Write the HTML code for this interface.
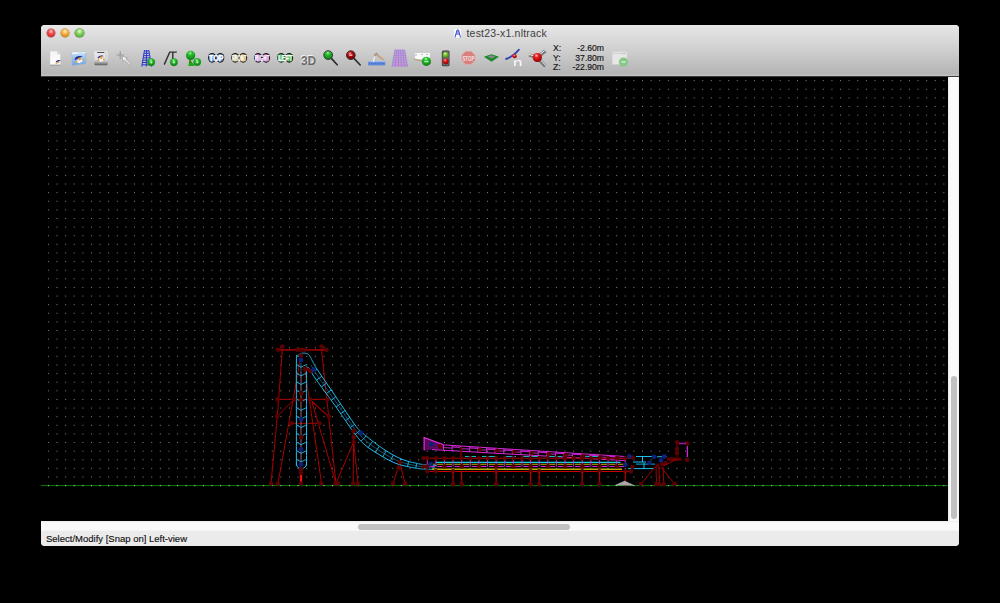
<!DOCTYPE html>
<html><head><meta charset="utf-8">
<style>
html,body{margin:0;padding:0;background:#000;width:1000px;height:603px;overflow:hidden;position:relative;font-family:"Liberation Sans",sans-serif;}
#win{position:absolute;left:41px;top:25px;width:918px;height:521px;border-radius:4px 4px 4px 4px;overflow:hidden;background:#ececec;}
#tb{position:absolute;left:0;top:0;width:918px;height:52px;background:linear-gradient(#e9e9e9 0px,#e3e3e3 4px,#cecece 26px,#b4b4b4 49px,#c0c0c0 50px,#c0c0c0 51px);}
#tbline{position:absolute;left:0;top:51px;width:918px;height:1px;background:#3c3c3c;}
.btn{position:absolute;top:3.8px;width:8.4px;height:8.4px;border-radius:50%;box-sizing:border-box;}
#title{position:absolute;left:425.5px;top:2px;font-size:10.5px;letter-spacing:0.2px;color:#404040;white-space:nowrap;}
#canvas{position:absolute;left:0;top:52px;width:907px;height:444px;background:#000;overflow:hidden;}
#vs{position:absolute;left:907px;top:52px;width:11px;height:444px;background:linear-gradient(90deg,#e8e8e8,#fafafa 2px,#fafafa 9px,#f0f0f0);}
#vthumb{position:absolute;left:3px;top:299px;width:6px;height:143px;border-radius:3px;background:#c1c1c1;}
#hs{position:absolute;left:0;top:496px;width:918px;height:10px;background:linear-gradient(#ececec,#fafafa 2px,#fafafa 8px,#f4f4f4);}
#hthumb{position:absolute;left:317px;top:3px;width:212px;height:6px;border-radius:3px;background:#c1c1c1;}
#status{position:absolute;left:0;top:506px;width:918px;height:15px;background:#ebebeb;}
#stext{position:absolute;left:5px;top:1.5px;font-size:9.5px;color:#111;-webkit-text-stroke:0.15px #111;white-space:nowrap;}
.coord{position:absolute;font-size:8.5px;color:#2a2a2a;white-space:nowrap;}
</style></head><body>
<div id="win">
  <div id="tb">
    <div class="btn" style="left:5.8px;background:radial-gradient(circle at 50% 30%,#ffd0d0 0,#f05050 35%,#d83030 70%,#a02020 100%);box-shadow:0 0 0 0.5px #a04040;"></div>
    <div class="btn" style="left:20.1px;background:radial-gradient(circle at 50% 30%,#fff0c0 0,#f8b040 40%,#e09020 70%,#a8701c 100%);box-shadow:0 0 0 0.5px #a07020;"></div>
    <div class="btn" style="left:34.4px;background:radial-gradient(circle at 50% 30%,#e0ffd0 0,#88d060 40%,#60b040 70%,#3a8028 100%);box-shadow:0 0 0 0.5px #408030;"></div>
    <div id="title">test23-x1.nltrack</div>
    <div id="tbline"></div>
  </div>
  <div id="canvas"></div>
  <div id="vs"><div id="vthumb"></div></div>
  <div id="hs"><div id="hthumb"></div></div>
  <div id="status"><div id="stext">Select/Modify [Snap on] Left-view</div></div>
</div>
<svg id="draw" width="1000" height="603" viewBox="0 0 1000 603" style="position:absolute;left:0;top:0">
<g id="grid"><path d="M47.91 80.62 H948" stroke="#868686" stroke-width="1" stroke-dasharray="1 7.61"/>
<path d="M47.91 89.24 H948" stroke="#868686" stroke-width="1" stroke-dasharray="1 7.61"/>
<path d="M47.91 97.85 H948" stroke="#868686" stroke-width="1" stroke-dasharray="1 7.61"/>
<path d="M47.91 106.47 H948" stroke="#868686" stroke-width="1" stroke-dasharray="1 7.61"/>
<path d="M47.91 115.09 H948" stroke="#868686" stroke-width="1" stroke-dasharray="1 7.61"/>
<path d="M47.91 123.71 H948" stroke="#868686" stroke-width="1" stroke-dasharray="1 7.61"/>
<path d="M47.91 132.32 H948" stroke="#868686" stroke-width="1" stroke-dasharray="1 7.61"/>
<path d="M47.91 140.94 H948" stroke="#868686" stroke-width="1" stroke-dasharray="1 7.61"/>
<path d="M47.91 149.56 H948" stroke="#868686" stroke-width="1" stroke-dasharray="1 7.61"/>
<path d="M47.91 158.17 H948" stroke="#868686" stroke-width="1" stroke-dasharray="1 7.61"/>
<path d="M47.91 166.79 H948" stroke="#868686" stroke-width="1" stroke-dasharray="1 7.61"/>
<path d="M47.91 175.41 H948" stroke="#868686" stroke-width="1" stroke-dasharray="1 7.61"/>
<path d="M47.91 184.02 H948" stroke="#868686" stroke-width="1" stroke-dasharray="1 7.61"/>
<path d="M47.91 192.64 H948" stroke="#868686" stroke-width="1" stroke-dasharray="1 7.61"/>
<path d="M47.91 201.26 H948" stroke="#868686" stroke-width="1" stroke-dasharray="1 7.61"/>
<path d="M47.91 209.88 H948" stroke="#868686" stroke-width="1" stroke-dasharray="1 7.61"/>
<path d="M47.91 218.49 H948" stroke="#868686" stroke-width="1" stroke-dasharray="1 7.61"/>
<path d="M47.91 227.11 H948" stroke="#868686" stroke-width="1" stroke-dasharray="1 7.61"/>
<path d="M47.91 235.73 H948" stroke="#868686" stroke-width="1" stroke-dasharray="1 7.61"/>
<path d="M47.91 244.34 H948" stroke="#868686" stroke-width="1" stroke-dasharray="1 7.61"/>
<path d="M47.91 252.96 H948" stroke="#868686" stroke-width="1" stroke-dasharray="1 7.61"/>
<path d="M47.91 261.58 H948" stroke="#868686" stroke-width="1" stroke-dasharray="1 7.61"/>
<path d="M47.91 270.19 H948" stroke="#868686" stroke-width="1" stroke-dasharray="1 7.61"/>
<path d="M47.91 278.81 H948" stroke="#868686" stroke-width="1" stroke-dasharray="1 7.61"/>
<path d="M47.91 287.43 H948" stroke="#868686" stroke-width="1" stroke-dasharray="1 7.61"/>
<path d="M47.91 296.05 H948" stroke="#868686" stroke-width="1" stroke-dasharray="1 7.61"/>
<path d="M47.91 304.66 H948" stroke="#868686" stroke-width="1" stroke-dasharray="1 7.61"/>
<path d="M47.91 313.28 H948" stroke="#868686" stroke-width="1" stroke-dasharray="1 7.61"/>
<path d="M47.91 321.90 H948" stroke="#868686" stroke-width="1" stroke-dasharray="1 7.61"/>
<path d="M47.91 330.51 H948" stroke="#868686" stroke-width="1" stroke-dasharray="1 7.61"/>
<path d="M47.91 339.13 H948" stroke="#868686" stroke-width="1" stroke-dasharray="1 7.61"/>
<path d="M47.91 347.75 H948" stroke="#868686" stroke-width="1" stroke-dasharray="1 7.61"/>
<path d="M47.91 356.36 H948" stroke="#868686" stroke-width="1" stroke-dasharray="1 7.61"/>
<path d="M47.91 364.98 H948" stroke="#868686" stroke-width="1" stroke-dasharray="1 7.61"/>
<path d="M47.91 373.60 H948" stroke="#868686" stroke-width="1" stroke-dasharray="1 7.61"/>
<path d="M47.91 382.22 H948" stroke="#868686" stroke-width="1" stroke-dasharray="1 7.61"/>
<path d="M47.91 390.83 H948" stroke="#868686" stroke-width="1" stroke-dasharray="1 7.61"/>
<path d="M47.91 399.45 H948" stroke="#868686" stroke-width="1" stroke-dasharray="1 7.61"/>
<path d="M47.91 408.07 H948" stroke="#868686" stroke-width="1" stroke-dasharray="1 7.61"/>
<path d="M47.91 416.68 H948" stroke="#868686" stroke-width="1" stroke-dasharray="1 7.61"/>
<path d="M47.91 425.30 H948" stroke="#868686" stroke-width="1" stroke-dasharray="1 7.61"/>
<path d="M47.91 433.92 H948" stroke="#868686" stroke-width="1" stroke-dasharray="1 7.61"/>
<path d="M47.91 442.53 H948" stroke="#868686" stroke-width="1" stroke-dasharray="1 7.61"/>
<path d="M47.91 451.15 H948" stroke="#868686" stroke-width="1" stroke-dasharray="1 7.61"/>
<path d="M47.91 459.77 H948" stroke="#868686" stroke-width="1" stroke-dasharray="1 7.61"/>
<path d="M47.91 468.39 H948" stroke="#868686" stroke-width="1" stroke-dasharray="1 7.61"/>
<path d="M47.91 477.00 H948" stroke="#868686" stroke-width="1" stroke-dasharray="1 7.61"/>
<path d="M47.91 485.62 H948" stroke="#868686" stroke-width="1" stroke-dasharray="1 7.61"/></g>
<path d="M41 485.6 H948" stroke="#067a06" stroke-width="1"/>
<path d="M47.91 485.6 H948" stroke="#c8c8c8" stroke-width="1" stroke-dasharray="1 7.61"/>
<path d="M277.50 349.80 L327.30 349.80" stroke="#900000" stroke-width="1.80" fill="none"/>
<path d="M282.30 350.00 L277.30 416.50 L271.00 483.50" stroke="#aa0000" stroke-width="1.00" fill="none"/>
<path d="M321.50 350.00 L328.70 416.50 L336.00 483.50" stroke="#aa0000" stroke-width="1.00" fill="none"/>
<path d="M277.50 399.40 L327.30 399.40" stroke="#aa0000" stroke-width="1.00" fill="none"/>
<path d="M294.20 399.40 L277.20 416.40" stroke="#aa0000" stroke-width="1.00" fill="none"/>
<path d="M310.00 399.40 L328.70 416.40" stroke="#aa0000" stroke-width="1.00" fill="none"/>
<path d="M291.50 423.30 L319.50 423.30" stroke="#aa0000" stroke-width="1.00" fill="none"/>
<path d="M300.50 358.00 L278.00 483.50" stroke="#aa0000" stroke-width="1.00" fill="none"/>
<path d="M305.00 370.00 L321.60 483.60" stroke="#aa0000" stroke-width="1.00" fill="none"/>
<path d="M312.00 402.00 L336.00 483.50" stroke="#aa0000" stroke-width="1.00" fill="none"/>
<path d="M312.00 402.00 L328.40 416.40" stroke="#aa0000" stroke-width="1.00" fill="none"/>
<path d="M301.00 466.00 L301.00 483.50" stroke="#aa0000" stroke-width="0.80" fill="none"/>
<path d="M301.00 474.00 L301.00 483.00" stroke="#ff1010" stroke-width="2.20" fill="none"/>
<path d="M336.00 483.50 L353.70 441.80" stroke="#aa0000" stroke-width="1.00" fill="none"/>
<path d="M353.70 431.00 L353.20 483.50" stroke="#aa0000" stroke-width="1.00" fill="none"/>
<path d="M353.70 442.00 L358.00 483.50" stroke="#aa0000" stroke-width="1.00" fill="none"/>
<path d="M399.80 462.30 L393.00 483.50" stroke="#aa0000" stroke-width="1.00" fill="none"/>
<path d="M399.80 462.30 L405.00 483.50" stroke="#aa0000" stroke-width="1.00" fill="none"/>
<path d="M296.40 466.00 L296.40 463.32 L296.40 459.95 L296.40 455.99 L296.40 451.54 L296.40 446.69 L296.40 441.54 L296.40 436.20 L296.40 430.77 L296.40 425.33 L296.40 420.00 L296.40 414.38 L296.39 408.16 L296.37 401.55 L296.36 394.73 L296.34 387.92 L296.34 381.31 L296.33 375.12 L296.34 369.53 L296.36 364.76 L296.40 361.00 L296.44 358.32 L296.49 356.55 L296.54 355.53 L296.59 355.11 L296.66 355.12 L296.75 355.42 L296.85 355.85 L296.97 356.24 L297.12 356.44 L297.30 356.30 L297.51 355.95 L297.74 355.61 L297.99 355.30 L298.27 355.01 L298.56 354.74 L298.88 354.49 L299.21 354.26 L299.56 354.05 L299.92 353.87 L300.30 353.70 L300.71 353.56 L301.15 353.44 L301.62 353.34 L302.11 353.26 L302.61 353.20 L303.12 353.16 L303.62 353.14 L304.10 353.14 L304.57 353.16 L305.00 353.20 L305.41 353.25 L305.81 353.32 L306.20 353.41 L306.58 353.51 L306.94 353.64 L307.30 353.78 L307.64 353.95 L307.97 354.14 L308.29 354.36 L308.60 354.60 L308.89 354.87 L309.15 355.16 L309.39 355.48 L309.62 355.82 L309.84 356.18 L310.05 356.57 L310.27 356.97 L310.50 357.40 L310.74 357.84 L311.00 358.30 L311.27 358.79 L311.56 359.31 L311.85 359.87 L312.14 360.44 L312.44 361.03 L312.75 361.63 L313.06 362.23 L313.37 362.83 L313.69 363.43 L314.00 364.00 L314.25 364.47 L314.39 364.78 L314.48 365.00 L314.56 365.20 L314.67 365.44 L314.86 365.80 L315.17 366.32 L315.65 367.09 L316.34 368.16 L317.30 369.60 L318.54 371.45 L320.05 373.68 L321.77 376.20 L323.66 378.96 L325.67 381.90 L327.76 384.95 L329.88 388.05 L331.99 391.13 L334.05 394.14 L336.00 397.00 L337.94 399.87 L339.97 402.89 L342.06 406.00 L344.15 409.14 L346.23 412.24 L348.25 415.25 L350.17 418.09 L351.96 420.70 L353.58 423.03 L355.00 425.00 L356.16 426.57 L357.07 427.76 L357.79 428.66 L358.38 429.33 L358.88 429.84 L359.34 430.27 L359.84 430.68 L360.41 431.14 L361.11 431.72 L362.00 432.50 L363.07 433.44 L364.26 434.46 L365.55 435.54 L366.91 436.65 L368.31 437.78 L369.73 438.91 L371.13 440.01 L372.50 441.08 L373.79 442.08 L375.00 443.00 L376.12 443.85 L377.19 444.64 L378.22 445.39 L379.22 446.10 L380.19 446.78 L381.14 447.44 L382.09 448.08 L383.05 448.72 L384.01 449.36 L385.00 450.00 L386.00 450.65 L387.00 451.29 L388.00 451.92 L389.00 452.55 L390.00 453.16 L391.00 453.76 L392.00 454.35 L393.00 454.92 L394.00 455.47 L395.00 456.00 L396.00 456.51 L397.00 457.01 L398.00 457.49 L399.00 457.96 L400.00 458.41 L401.00 458.85 L402.00 459.26 L403.00 459.66 L404.00 460.04 L405.00 460.40 L406.01 460.74 L407.03 461.05 L408.06 461.35 L409.10 461.62 L410.12 461.88 L411.14 462.13 L412.15 462.36 L413.13 462.58 L414.08 462.79 L415.00 463.00 L415.85 463.20 L416.63 463.37 L417.36 463.54 L418.06 463.69 L418.75 463.83 L419.46 463.97 L420.22 464.10 L421.05 464.23 L421.97 464.36 L423.00 464.50 L424.22 464.64 L425.64 464.79 L427.20 464.95 L428.84 465.10 L430.50 465.24 L432.12 465.38 L433.64 465.51 L435.00 465.63 L436.14 465.72 L437.00 465.80" stroke="#20bcee" stroke-width="1.00" fill="none"/>
<path d="M306.50 466.00 L306.50 463.27 L306.50 459.78 L306.50 455.64 L306.50 451.01 L306.50 446.00 L306.50 440.75 L306.50 435.40 L306.50 430.06 L306.50 424.89 L306.50 420.00 L306.50 415.09 L306.48 409.83 L306.47 404.38 L306.45 398.86 L306.43 393.41 L306.42 388.16 L306.42 383.27 L306.43 378.85 L306.46 375.05 L306.50 372.00 L306.56 369.76 L306.62 368.21 L306.69 367.24 L306.77 366.74 L306.87 366.61 L306.98 366.72 L307.10 366.98 L307.25 367.27 L307.41 367.48 L307.60 367.50 L307.81 367.43 L308.04 367.43 L308.29 367.50 L308.55 367.65 L308.84 367.86 L309.14 368.13 L309.46 368.46 L309.79 368.85 L310.14 369.30 L310.50 369.80 L310.82 370.29 L311.05 370.75 L311.24 371.22 L311.44 371.73 L311.68 372.33 L312.01 373.05 L312.46 373.94 L313.08 375.03 L313.92 376.37 L315.00 378.00 L316.37 379.96 L318.01 382.25 L319.86 384.80 L321.88 387.56 L324.03 390.48 L326.26 393.50 L328.51 396.57 L330.75 399.63 L332.93 402.62 L335.00 405.50 L337.05 408.39 L339.16 411.42 L341.31 414.53 L343.48 417.67 L345.62 420.78 L347.72 423.81 L349.74 426.70 L351.64 429.40 L353.41 431.85 L355.00 434.00 L356.40 435.83 L357.64 437.38 L358.74 438.71 L359.72 439.85 L360.62 440.84 L361.48 441.73 L362.31 442.55 L363.16 443.34 L364.04 444.14 L365.00 445.00 L366.00 445.87 L367.00 446.67 L368.00 447.43 L369.00 448.14 L370.00 448.81 L371.00 449.46 L372.00 450.10 L373.00 450.73 L374.00 451.36 L375.00 452.00 L376.00 452.64 L377.00 453.28 L378.00 453.90 L379.00 454.52 L380.00 455.12 L381.00 455.72 L382.00 456.31 L383.00 456.88 L384.00 457.45 L385.00 458.00 L386.00 458.55 L387.00 459.10 L388.00 459.64 L389.00 460.17 L390.00 460.69 L391.00 461.19 L392.00 461.68 L393.00 462.14 L394.00 462.59 L395.00 463.00 L396.00 463.39 L397.00 463.74 L398.00 464.08 L399.00 464.39 L400.00 464.69 L401.00 464.97 L402.00 465.24 L403.00 465.50 L404.00 465.75 L405.00 466.00 L406.01 466.25 L407.03 466.48 L408.06 466.70 L409.10 466.92 L410.12 467.12 L411.14 467.32 L412.15 467.50 L413.13 467.68 L414.08 467.85 L415.00 468.00 L415.85 468.14 L416.63 468.27 L417.36 468.39 L418.06 468.50 L418.75 468.59 L419.46 468.68 L420.22 468.77 L421.05 468.85 L421.97 468.92 L423.00 469.00 L424.22 469.07 L425.64 469.14 L427.20 469.20 L428.84 469.26 L430.50 469.31 L432.12 469.36 L433.64 469.40 L435.00 469.44 L436.14 469.47 L437.00 469.50" stroke="#20bcee" stroke-width="1.00" fill="none"/>
<path d="M296.4 463 Q296.4 468.5 301.4 468.5 Q306.5 468.5 306.5 463" stroke="#20bcee" fill="none" stroke-width="1"/>
<path d="M301.00 363.00 L301.00 466.00" stroke="#28a8dc" stroke-width="0.60" fill="none"/>
<path d="M301.00 372.00 L301.00 466.00" stroke="#c03838" stroke-width="0.70" fill="none"/>
<path d="M296.40 364.50 L301.00 367.30 L306.50 364.50" stroke="#20bcee" stroke-width="0.90" fill="none"/>
<path d="M296.40 373.11 L301.00 375.91 L306.50 373.11" stroke="#20bcee" stroke-width="0.90" fill="none"/>
<path d="M296.40 381.72 L301.00 384.52 L306.50 381.72" stroke="#20bcee" stroke-width="0.90" fill="none"/>
<path d="M296.40 390.33 L301.00 393.13 L306.50 390.33" stroke="#20bcee" stroke-width="0.90" fill="none"/>
<path d="M296.40 398.94 L301.00 401.74 L306.50 398.94" stroke="#20bcee" stroke-width="0.90" fill="none"/>
<path d="M296.40 407.55 L301.00 410.35 L306.50 407.55" stroke="#20bcee" stroke-width="0.90" fill="none"/>
<path d="M296.40 416.16 L301.00 418.96 L306.50 416.16" stroke="#20bcee" stroke-width="0.90" fill="none"/>
<path d="M296.40 424.77 L301.00 427.57 L306.50 424.77" stroke="#20bcee" stroke-width="0.90" fill="none"/>
<path d="M296.40 433.38 L301.00 436.18 L306.50 433.38" stroke="#20bcee" stroke-width="0.90" fill="none"/>
<path d="M296.40 441.99 L301.00 444.79 L306.50 441.99" stroke="#20bcee" stroke-width="0.90" fill="none"/>
<path d="M296.40 450.60 L301.00 453.40 L306.50 450.60" stroke="#20bcee" stroke-width="0.90" fill="none"/>
<path d="M296.40 459.21 L301.00 462.01 L306.50 459.21" stroke="#20bcee" stroke-width="0.90" fill="none"/>
<path d="M317.18 369.42 L311.40 371.63" stroke="#20bcee" stroke-width="0.90" fill="none"/>
<path d="M321.83 376.29 L316.47 380.10" stroke="#20bcee" stroke-width="0.90" fill="none"/>
<path d="M326.52 383.14 L321.40 386.90" stroke="#20bcee" stroke-width="0.90" fill="none"/>
<path d="M331.21 389.99 L326.38 393.67" stroke="#20bcee" stroke-width="0.90" fill="none"/>
<path d="M335.89 396.84 L331.17 400.20" stroke="#20bcee" stroke-width="0.90" fill="none"/>
<path d="M340.53 403.73 L336.07 407.02" stroke="#20bcee" stroke-width="0.90" fill="none"/>
<path d="M345.15 410.63 L340.71 413.66" stroke="#20bcee" stroke-width="0.90" fill="none"/>
<path d="M349.78 417.51 L345.48 420.57" stroke="#20bcee" stroke-width="0.90" fill="none"/>
<path d="M354.52 424.33 L350.27 427.47" stroke="#20bcee" stroke-width="0.90" fill="none"/>
<path d="M359.83 430.67 L355.21 434.27" stroke="#20bcee" stroke-width="0.90" fill="none"/>
<path d="M366.16 436.04 L360.96 441.19" stroke="#20bcee" stroke-width="0.90" fill="none"/>
<path d="M372.66 441.20 L368.15 447.53" stroke="#20bcee" stroke-width="0.90" fill="none"/>
<path d="M379.31 446.17 L375.43 452.28" stroke="#20bcee" stroke-width="0.90" fill="none"/>
<path d="M386.21 450.78 L382.86 456.80" stroke="#20bcee" stroke-width="0.90" fill="none"/>
<path d="M393.30 455.08 L390.25 460.81" stroke="#20bcee" stroke-width="0.90" fill="none"/>
<path d="M400.75 458.74 L399.12 464.43" stroke="#20bcee" stroke-width="0.90" fill="none"/>
<path d="M408.58 461.48 L407.55 466.59" stroke="#20bcee" stroke-width="0.90" fill="none"/>
<path d="M416.66 463.38 L415.80 468.13" stroke="#20bcee" stroke-width="0.90" fill="none"/>
<path d="M424.84 464.71 L424.74 469.10" stroke="#20bcee" stroke-width="0.90" fill="none"/>
<path d="M433.11 465.47 L433.14 469.39" stroke="#20bcee" stroke-width="0.90" fill="none"/>
<path d="M311.10 365.18 L311.67 366.17 L312.49 367.54 L313.35 368.88 L314.15 370.26 L315.26 372.32 L316.43 374.18 L317.65 376.02 L318.81 377.70 L319.98 379.38 L321.16 381.06 L322.26 382.62 L323.44 384.29 L324.63 385.96 L325.72 387.51 L326.91 389.18 L328.10 390.85 L329.20 392.40 L330.39 394.07 L331.57 395.74 L332.67 397.30 L333.85 398.97 L335.03 400.65 L336.11 402.21 L337.28 403.89 L338.36 405.45 L339.52 407.14 L340.68 408.84 L341.75 410.41 L342.90 412.10 L343.97 413.67 L345.12 415.37 L346.28 417.06 L347.35 418.63 L348.51 420.32 L349.67 422.01 L350.76 423.57 L351.93 425.25 L353.12 426.91 L354.33 428.57 L355.47 430.09 L356.78 431.66 L358.18 433.14 L359.58 434.62 L361.00 436.09 L362.55 437.65 L364.04 439.05 L365.68 440.51 L367.24 441.84 L368.94 443.24 L370.68 444.57 L372.47 445.86 L374.15 447.03 L375.84 448.18 L377.41 449.25 L379.12 450.39 L380.84 451.50 L382.58 452.59 L384.32 453.66 L386.08 454.72 L387.85 455.75 L389.63 456.77 L391.42 457.76 L393.24 458.70 L395.08 459.60 L397.10 460.49 L399.14 461.29 L401.07 461.98 L403.01 462.62 L404.97 463.22 L406.95 463.76 L408.94 464.25 L410.94 464.69 L412.95 465.10 L414.96 465.50 L416.82 465.87 L418.83 466.24 L421.01 466.54 L423.05 466.76 L425.09 466.93 L426.99 467.06 L429.03 467.19 L431.08 467.31 L433.12 467.43 L435.02 467.54" stroke="#1594c4" stroke-width="0.60" fill="none"/>
<circle cx="282.30" cy="346.50" r="2.30" fill="#5c0000"/>
<circle cx="278.00" cy="349.80" r="2.30" fill="#5c0000"/>
<circle cx="321.50" cy="346.50" r="2.30" fill="#5c0000"/>
<circle cx="326.50" cy="349.80" r="2.30" fill="#5c0000"/>
<circle cx="297.50" cy="349.80" r="2.30" fill="#5c0000"/>
<circle cx="301.00" cy="349.80" r="2.30" fill="#5c0000"/>
<circle cx="304.50" cy="349.80" r="2.30" fill="#5c0000"/>
<circle cx="277.50" cy="399.40" r="2.30" fill="#5c0000"/>
<circle cx="294.20" cy="399.40" r="2.30" fill="#5c0000"/>
<circle cx="310.00" cy="399.40" r="2.30" fill="#5c0000"/>
<circle cx="327.30" cy="399.40" r="2.30" fill="#5c0000"/>
<circle cx="277.20" cy="416.40" r="2.30" fill="#5c0000"/>
<circle cx="328.70" cy="416.40" r="2.30" fill="#5c0000"/>
<circle cx="291.50" cy="423.30" r="2.30" fill="#5c0000"/>
<circle cx="319.50" cy="423.30" r="2.30" fill="#5c0000"/>
<circle cx="301.00" cy="355.50" r="2.30" fill="#5c0000"/>
<circle cx="305.00" cy="369.50" r="2.30" fill="#5c0000"/>
<circle cx="301.00" cy="393.00" r="2.30" fill="#5c0000"/>
<circle cx="301.00" cy="400.00" r="2.30" fill="#5c0000"/>
<circle cx="301.00" cy="437.00" r="2.30" fill="#5c0000"/>
<circle cx="301.00" cy="469.50" r="2.30" fill="#5c0000"/>
<circle cx="301.00" cy="473.00" r="2.30" fill="#5c0000"/>
<circle cx="271.00" cy="483.50" r="2.30" fill="#5c0000"/>
<circle cx="278.00" cy="483.50" r="2.30" fill="#5c0000"/>
<circle cx="301.00" cy="483.50" r="2.30" fill="#5c0000"/>
<circle cx="321.50" cy="483.50" r="2.30" fill="#5c0000"/>
<circle cx="335.50" cy="483.50" r="2.30" fill="#5c0000"/>
<circle cx="338.00" cy="483.50" r="2.30" fill="#5c0000"/>
<circle cx="353.20" cy="483.50" r="2.30" fill="#5c0000"/>
<circle cx="358.00" cy="483.50" r="2.30" fill="#5c0000"/>
<circle cx="353.70" cy="431.00" r="2.30" fill="#5c0000"/>
<circle cx="353.70" cy="437.00" r="2.30" fill="#5c0000"/>
<circle cx="353.70" cy="442.00" r="2.30" fill="#5c0000"/>
<circle cx="399.80" cy="462.30" r="2.30" fill="#5c0000"/>
<circle cx="398.50" cy="468.00" r="2.30" fill="#5c0000"/>
<circle cx="393.00" cy="483.50" r="2.30" fill="#5c0000"/>
<circle cx="405.00" cy="483.50" r="2.30" fill="#5c0000"/>
<circle cx="310.00" cy="371.00" r="2.30" fill="#5c0000"/>
<path d="M303.00 367.00 L313.00 371.00" stroke="#5c0000" stroke-width="2.00" fill="none"/>
<circle cx="301.00" cy="360.00" r="2.40" fill="#0a2278"/>
<circle cx="313.70" cy="369.60" r="2.40" fill="#0a2278"/>
<circle cx="301.00" cy="419.30" r="2.40" fill="#0a2278"/>
<circle cx="301.00" cy="449.30" r="2.40" fill="#0a2278"/>
<circle cx="301.00" cy="464.50" r="2.40" fill="#0a2278"/>
<circle cx="361.00" cy="433.00" r="2.40" fill="#0a2278"/>
<path d="M424.1 437.5 L443.5 444.8 L443.5 448.5 L432 449.6 L424.1 450.6 Z" fill="#5a0a5a"/>
<path d="M424.10 450.60 L424.10 437.50 L443.50 444.80" stroke="#f030f0" stroke-width="1.10" fill="none"/>
<path d="M443.50 444.90 L625.00 456.52" stroke="#f030f0" stroke-width="0.90" fill="none"/>
<path d="M432.00 449.60 L625.00 460.58" stroke="#f030f0" stroke-width="0.90" fill="none"/>
<path d="M443.50 444.90 L443.50 450.25" stroke="#f030f0" stroke-width="0.80" fill="none"/>
<path d="M443.50 447.58 L452.10 448.08" stroke="#f030f0" stroke-width="0.80" fill="none"/>
<path d="M452.11 445.45 L452.11 450.74" stroke="#f030f0" stroke-width="0.80" fill="none"/>
<path d="M452.11 446.90 L460.71 447.40" stroke="#c020c8" stroke-width="1.30" fill="none"/>
<path d="M460.72 446.00 L460.72 451.23" stroke="#f030f0" stroke-width="0.80" fill="none"/>
<path d="M460.72 448.62 L469.32 449.12" stroke="#f030f0" stroke-width="0.80" fill="none"/>
<path d="M469.33 446.55 L469.33 451.72" stroke="#f030f0" stroke-width="0.80" fill="none"/>
<path d="M469.33 447.94 L477.93 448.44" stroke="#c020c8" stroke-width="1.30" fill="none"/>
<path d="M477.94 447.10 L477.94 452.21" stroke="#f030f0" stroke-width="0.80" fill="none"/>
<path d="M477.94 449.66 L486.54 450.16" stroke="#f030f0" stroke-width="0.80" fill="none"/>
<path d="M486.55 447.66 L486.55 452.70" stroke="#f030f0" stroke-width="0.80" fill="none"/>
<path d="M486.55 448.98 L495.15 449.48" stroke="#c020c8" stroke-width="1.30" fill="none"/>
<path d="M495.16 448.21 L495.16 453.19" stroke="#f030f0" stroke-width="0.80" fill="none"/>
<path d="M495.16 450.70 L503.76 451.20" stroke="#f030f0" stroke-width="0.80" fill="none"/>
<path d="M503.77 448.76 L503.77 453.68" stroke="#f030f0" stroke-width="0.80" fill="none"/>
<path d="M503.77 450.02 L512.37 450.52" stroke="#c020c8" stroke-width="1.30" fill="none"/>
<path d="M512.38 449.31 L512.38 454.17" stroke="#f030f0" stroke-width="0.80" fill="none"/>
<path d="M512.38 451.74 L520.98 452.24" stroke="#f030f0" stroke-width="0.80" fill="none"/>
<path d="M520.99 449.86 L520.99 454.66" stroke="#f030f0" stroke-width="0.80" fill="none"/>
<path d="M520.99 451.06 L529.59 451.56" stroke="#c020c8" stroke-width="1.30" fill="none"/>
<path d="M529.60 450.41 L529.60 455.15" stroke="#f030f0" stroke-width="0.80" fill="none"/>
<path d="M529.60 452.78 L538.20 453.28" stroke="#f030f0" stroke-width="0.80" fill="none"/>
<path d="M538.21 450.96 L538.21 455.64" stroke="#f030f0" stroke-width="0.80" fill="none"/>
<path d="M538.21 452.10 L546.81 452.60" stroke="#c020c8" stroke-width="1.30" fill="none"/>
<path d="M546.82 451.51 L546.82 456.13" stroke="#f030f0" stroke-width="0.80" fill="none"/>
<path d="M546.82 453.82 L555.42 454.32" stroke="#f030f0" stroke-width="0.80" fill="none"/>
<path d="M555.43 452.07 L555.43 456.63" stroke="#f030f0" stroke-width="0.80" fill="none"/>
<path d="M555.43 453.15 L564.03 453.65" stroke="#c020c8" stroke-width="1.30" fill="none"/>
<path d="M564.04 452.62 L564.04 457.12" stroke="#f030f0" stroke-width="0.80" fill="none"/>
<path d="M564.04 454.87 L572.64 455.37" stroke="#f030f0" stroke-width="0.80" fill="none"/>
<path d="M572.65 453.17 L572.65 457.61" stroke="#f030f0" stroke-width="0.80" fill="none"/>
<path d="M572.65 454.19 L581.25 454.69" stroke="#c020c8" stroke-width="1.30" fill="none"/>
<path d="M581.26 453.72 L581.26 458.10" stroke="#f030f0" stroke-width="0.80" fill="none"/>
<path d="M581.26 455.91 L589.86 456.41" stroke="#f030f0" stroke-width="0.80" fill="none"/>
<path d="M589.87 454.27 L589.87 458.59" stroke="#f030f0" stroke-width="0.80" fill="none"/>
<path d="M589.87 455.23 L598.47 455.73" stroke="#c020c8" stroke-width="1.30" fill="none"/>
<path d="M598.48 454.82 L598.48 459.08" stroke="#f030f0" stroke-width="0.80" fill="none"/>
<path d="M598.48 456.95 L607.08 457.45" stroke="#f030f0" stroke-width="0.80" fill="none"/>
<path d="M607.09 455.37 L607.09 459.57" stroke="#f030f0" stroke-width="0.80" fill="none"/>
<path d="M607.09 456.27 L615.69 456.77" stroke="#c020c8" stroke-width="1.30" fill="none"/>
<path d="M615.70 455.92 L615.70 460.06" stroke="#f030f0" stroke-width="0.80" fill="none"/>
<path d="M615.70 457.99 L624.30 458.49" stroke="#f030f0" stroke-width="0.80" fill="none"/>
<path d="M430.00 458.30 L632.00 458.30" stroke="#aa0000" stroke-width="1.00" fill="none"/>
<path d="M436.00 462.40 L620.60 462.40" stroke="#12d4e4" stroke-width="1.30" fill="none"/>
<path d="M428.45 464.30 L434.85 464.30" stroke="#a89400" stroke-width="1.20" fill="none"/>
<path d="M437.06 464.30 L443.46 464.30" stroke="#a89400" stroke-width="1.20" fill="none"/>
<path d="M445.67 464.30 L452.07 464.30" stroke="#a89400" stroke-width="1.20" fill="none"/>
<path d="M454.28 464.30 L460.68 464.30" stroke="#a89400" stroke-width="1.20" fill="none"/>
<path d="M462.89 464.30 L469.29 464.30" stroke="#a89400" stroke-width="1.20" fill="none"/>
<path d="M471.50 464.30 L477.90 464.30" stroke="#a89400" stroke-width="1.20" fill="none"/>
<path d="M480.11 464.30 L486.51 464.30" stroke="#a89400" stroke-width="1.20" fill="none"/>
<path d="M488.72 464.30 L495.12 464.30" stroke="#a89400" stroke-width="1.20" fill="none"/>
<path d="M497.33 464.30 L503.73 464.30" stroke="#a89400" stroke-width="1.20" fill="none"/>
<path d="M505.94 464.30 L512.34 464.30" stroke="#a89400" stroke-width="1.20" fill="none"/>
<path d="M514.55 464.30 L520.95 464.30" stroke="#a89400" stroke-width="1.20" fill="none"/>
<path d="M523.16 464.30 L529.56 464.30" stroke="#a89400" stroke-width="1.20" fill="none"/>
<path d="M531.77 464.30 L538.17 464.30" stroke="#a89400" stroke-width="1.20" fill="none"/>
<path d="M540.38 464.30 L546.78 464.30" stroke="#a89400" stroke-width="1.20" fill="none"/>
<path d="M548.99 464.30 L555.39 464.30" stroke="#a89400" stroke-width="1.20" fill="none"/>
<path d="M557.60 464.30 L564.00 464.30" stroke="#a89400" stroke-width="1.20" fill="none"/>
<path d="M566.21 464.30 L572.61 464.30" stroke="#a89400" stroke-width="1.20" fill="none"/>
<path d="M574.82 464.30 L581.22 464.30" stroke="#a89400" stroke-width="1.20" fill="none"/>
<path d="M583.43 464.30 L589.83 464.30" stroke="#a89400" stroke-width="1.20" fill="none"/>
<path d="M592.04 464.30 L598.44 464.30" stroke="#a89400" stroke-width="1.20" fill="none"/>
<path d="M600.65 464.30 L607.05 464.30" stroke="#a89400" stroke-width="1.20" fill="none"/>
<path d="M609.26 464.30 L615.66 464.30" stroke="#a89400" stroke-width="1.20" fill="none"/>
<path d="M617.87 464.30 L624.27 464.30" stroke="#a89400" stroke-width="1.20" fill="none"/>
<path d="M428.75 466.50 L434.75 466.50" stroke="#d41ed4" stroke-width="1.00" fill="none"/>
<path d="M437.36 466.50 L443.36 466.50" stroke="#d41ed4" stroke-width="1.00" fill="none"/>
<path d="M445.97 466.50 L451.97 466.50" stroke="#d41ed4" stroke-width="1.00" fill="none"/>
<path d="M454.58 466.50 L460.58 466.50" stroke="#d41ed4" stroke-width="1.00" fill="none"/>
<path d="M463.19 466.50 L469.19 466.50" stroke="#d41ed4" stroke-width="1.00" fill="none"/>
<path d="M471.80 466.50 L477.80 466.50" stroke="#d41ed4" stroke-width="1.00" fill="none"/>
<path d="M480.41 466.50 L486.41 466.50" stroke="#d41ed4" stroke-width="1.00" fill="none"/>
<path d="M489.02 466.50 L495.02 466.50" stroke="#d41ed4" stroke-width="1.00" fill="none"/>
<path d="M497.63 466.50 L503.63 466.50" stroke="#d41ed4" stroke-width="1.00" fill="none"/>
<path d="M506.24 466.50 L512.24 466.50" stroke="#d41ed4" stroke-width="1.00" fill="none"/>
<path d="M514.85 466.50 L520.85 466.50" stroke="#d41ed4" stroke-width="1.00" fill="none"/>
<path d="M523.46 466.50 L529.46 466.50" stroke="#d41ed4" stroke-width="1.00" fill="none"/>
<path d="M532.07 466.50 L538.07 466.50" stroke="#d41ed4" stroke-width="1.00" fill="none"/>
<path d="M540.68 466.50 L546.68 466.50" stroke="#d41ed4" stroke-width="1.00" fill="none"/>
<path d="M549.29 466.50 L555.29 466.50" stroke="#d41ed4" stroke-width="1.00" fill="none"/>
<path d="M557.90 466.50 L563.90 466.50" stroke="#d41ed4" stroke-width="1.00" fill="none"/>
<path d="M566.51 466.50 L572.51 466.50" stroke="#d41ed4" stroke-width="1.00" fill="none"/>
<path d="M575.12 466.50 L581.12 466.50" stroke="#d41ed4" stroke-width="1.00" fill="none"/>
<path d="M583.73 466.50 L589.73 466.50" stroke="#d41ed4" stroke-width="1.00" fill="none"/>
<path d="M592.34 466.50 L598.34 466.50" stroke="#d41ed4" stroke-width="1.00" fill="none"/>
<path d="M600.95 466.50 L606.95 466.50" stroke="#d41ed4" stroke-width="1.00" fill="none"/>
<path d="M609.56 466.50 L615.56 466.50" stroke="#d41ed4" stroke-width="1.00" fill="none"/>
<path d="M618.17 466.50 L624.17 466.50" stroke="#d41ed4" stroke-width="1.00" fill="none"/>
<path d="M432.00 469.20 L622.00 469.20" stroke="#bcb400" stroke-width="1.40" fill="none"/>
<path d="M430.00 471.50 L631.00 471.50" stroke="#c80000" stroke-width="1.00" fill="none"/>
<path d="M465.00 456.50 L476.00 456.50" stroke="#10b8c8" stroke-width="1.00" fill="none"/>
<path d="M482.00 456.50 L497.00 456.50" stroke="#10b8c8" stroke-width="1.00" fill="none"/>
<path d="M504.00 456.50 L516.00 456.50" stroke="#10b8c8" stroke-width="1.00" fill="none"/>
<path d="M522.00 456.50 L538.00 456.50" stroke="#10b8c8" stroke-width="1.00" fill="none"/>
<path d="M548.00 456.50 L562.00 456.50" stroke="#10b8c8" stroke-width="1.00" fill="none"/>
<path d="M585.00 456.50 L600.00 456.50" stroke="#10b8c8" stroke-width="1.00" fill="none"/>
<path d="M427.25 458.30 L427.25 466.50" stroke="#f030f0" stroke-width="0.90" fill="none"/>
<path d="M435.86 458.30 L435.86 466.50" stroke="#f030f0" stroke-width="0.90" fill="none"/>
<path d="M444.47 458.30 L444.47 466.50" stroke="#f030f0" stroke-width="0.90" fill="none"/>
<path d="M453.08 458.30 L453.08 466.50" stroke="#f030f0" stroke-width="0.90" fill="none"/>
<path d="M461.69 458.30 L461.69 466.50" stroke="#f030f0" stroke-width="0.90" fill="none"/>
<path d="M470.30 458.30 L470.30 466.50" stroke="#f030f0" stroke-width="0.90" fill="none"/>
<path d="M478.91 458.30 L478.91 466.50" stroke="#f030f0" stroke-width="0.90" fill="none"/>
<path d="M487.52 458.30 L487.52 466.50" stroke="#f030f0" stroke-width="0.90" fill="none"/>
<path d="M496.13 458.30 L496.13 466.50" stroke="#f030f0" stroke-width="0.90" fill="none"/>
<path d="M504.74 458.30 L504.74 466.50" stroke="#f030f0" stroke-width="0.90" fill="none"/>
<path d="M513.35 458.30 L513.35 466.50" stroke="#f030f0" stroke-width="0.90" fill="none"/>
<path d="M521.96 458.30 L521.96 466.50" stroke="#f030f0" stroke-width="0.90" fill="none"/>
<path d="M530.57 458.30 L530.57 466.50" stroke="#f030f0" stroke-width="0.90" fill="none"/>
<path d="M539.18 458.30 L539.18 466.50" stroke="#f030f0" stroke-width="0.90" fill="none"/>
<path d="M547.79 458.30 L547.79 466.50" stroke="#f030f0" stroke-width="0.90" fill="none"/>
<path d="M556.40 458.30 L556.40 466.50" stroke="#f030f0" stroke-width="0.90" fill="none"/>
<path d="M565.01 458.30 L565.01 466.50" stroke="#f030f0" stroke-width="0.90" fill="none"/>
<path d="M573.62 458.30 L573.62 466.50" stroke="#f030f0" stroke-width="0.90" fill="none"/>
<path d="M582.23 458.30 L582.23 466.50" stroke="#f030f0" stroke-width="0.90" fill="none"/>
<path d="M590.84 458.30 L590.84 466.50" stroke="#f030f0" stroke-width="0.90" fill="none"/>
<path d="M599.45 458.30 L599.45 466.50" stroke="#f030f0" stroke-width="0.90" fill="none"/>
<path d="M608.06 458.30 L608.06 466.50" stroke="#f030f0" stroke-width="0.90" fill="none"/>
<path d="M616.67 458.30 L616.67 466.50" stroke="#f030f0" stroke-width="0.90" fill="none"/>
<path d="M625.28 458.30 L625.28 466.50" stroke="#f030f0" stroke-width="0.90" fill="none"/>
<circle cx="427.25" cy="458.30" r="2.20" fill="#5c0000"/>
<circle cx="427.25" cy="466.50" r="2.20" fill="#5c0000"/>
<circle cx="427.25" cy="471.30" r="2.20" fill="#5c0000"/>
<circle cx="435.86" cy="458.30" r="2.20" fill="#5c0000"/>
<circle cx="435.86" cy="471.30" r="2.20" fill="#5c0000"/>
<circle cx="444.47" cy="458.30" r="2.20" fill="#5c0000"/>
<circle cx="444.47" cy="466.50" r="2.20" fill="#5c0000"/>
<circle cx="453.08" cy="458.30" r="2.20" fill="#5c0000"/>
<circle cx="453.08" cy="471.30" r="2.20" fill="#5c0000"/>
<circle cx="461.69" cy="458.30" r="2.20" fill="#5c0000"/>
<circle cx="461.69" cy="466.50" r="2.20" fill="#5c0000"/>
<circle cx="470.30" cy="458.30" r="2.20" fill="#5c0000"/>
<circle cx="478.91" cy="458.30" r="2.20" fill="#5c0000"/>
<circle cx="478.91" cy="466.50" r="2.20" fill="#5c0000"/>
<circle cx="487.52" cy="458.30" r="2.20" fill="#5c0000"/>
<circle cx="496.13" cy="458.30" r="2.20" fill="#5c0000"/>
<circle cx="496.13" cy="466.50" r="2.20" fill="#5c0000"/>
<circle cx="496.13" cy="471.30" r="2.20" fill="#5c0000"/>
<circle cx="504.74" cy="458.30" r="2.20" fill="#5c0000"/>
<circle cx="513.35" cy="458.30" r="2.20" fill="#5c0000"/>
<circle cx="513.35" cy="466.50" r="2.20" fill="#5c0000"/>
<circle cx="521.96" cy="458.30" r="2.20" fill="#5c0000"/>
<circle cx="530.57" cy="458.30" r="2.20" fill="#5c0000"/>
<circle cx="530.57" cy="466.50" r="2.20" fill="#5c0000"/>
<circle cx="530.57" cy="471.30" r="2.20" fill="#5c0000"/>
<circle cx="539.18" cy="458.30" r="2.20" fill="#5c0000"/>
<circle cx="539.18" cy="471.30" r="2.20" fill="#5c0000"/>
<circle cx="547.79" cy="458.30" r="2.20" fill="#5c0000"/>
<circle cx="547.79" cy="466.50" r="2.20" fill="#5c0000"/>
<circle cx="556.40" cy="458.30" r="2.20" fill="#5c0000"/>
<circle cx="565.01" cy="458.30" r="2.20" fill="#5c0000"/>
<circle cx="565.01" cy="466.50" r="2.20" fill="#5c0000"/>
<circle cx="573.62" cy="458.30" r="2.20" fill="#5c0000"/>
<circle cx="582.23" cy="458.30" r="2.20" fill="#5c0000"/>
<circle cx="582.23" cy="466.50" r="2.20" fill="#5c0000"/>
<circle cx="582.23" cy="471.30" r="2.20" fill="#5c0000"/>
<circle cx="590.84" cy="458.30" r="2.20" fill="#5c0000"/>
<circle cx="599.45" cy="458.30" r="2.20" fill="#5c0000"/>
<circle cx="599.45" cy="466.50" r="2.20" fill="#5c0000"/>
<circle cx="599.45" cy="471.30" r="2.20" fill="#5c0000"/>
<circle cx="608.06" cy="458.30" r="2.20" fill="#5c0000"/>
<circle cx="616.67" cy="458.30" r="2.20" fill="#5c0000"/>
<circle cx="616.67" cy="466.50" r="2.20" fill="#5c0000"/>
<circle cx="625.28" cy="458.30" r="2.20" fill="#5c0000"/>
<circle cx="625.28" cy="471.30" r="2.20" fill="#5c0000"/>
<circle cx="423.50" cy="458.30" r="2.20" fill="#5c0000"/>
<circle cx="423.30" cy="466.50" r="2.20" fill="#5c0000"/>
<path d="M453.08 471.50 L453.08 484.00" stroke="#c00000" stroke-width="1.10" fill="none"/>
<circle cx="453.08" cy="484.00" r="2.30" fill="#5c0000"/>
<path d="M461.69 471.50 L461.69 484.00" stroke="#c00000" stroke-width="1.10" fill="none"/>
<circle cx="461.69" cy="484.00" r="2.30" fill="#5c0000"/>
<path d="M496.13 471.50 L496.13 484.00" stroke="#c00000" stroke-width="1.10" fill="none"/>
<circle cx="496.13" cy="484.00" r="2.30" fill="#5c0000"/>
<path d="M530.57 471.50 L530.57 484.00" stroke="#c00000" stroke-width="1.10" fill="none"/>
<circle cx="530.57" cy="484.00" r="2.30" fill="#5c0000"/>
<path d="M539.18 471.50 L539.18 484.00" stroke="#c00000" stroke-width="1.10" fill="none"/>
<circle cx="539.18" cy="484.00" r="2.30" fill="#5c0000"/>
<path d="M582.23 471.50 L582.23 484.00" stroke="#c00000" stroke-width="1.10" fill="none"/>
<circle cx="582.23" cy="484.00" r="2.30" fill="#5c0000"/>
<path d="M599.45 471.50 L599.45 484.00" stroke="#c00000" stroke-width="1.10" fill="none"/>
<circle cx="599.45" cy="484.00" r="2.30" fill="#5c0000"/>
<path d="M625.28 471.50 L625.28 484.00" stroke="#c00000" stroke-width="1.10" fill="none"/>
<circle cx="625.28" cy="484.00" r="2.30" fill="#5c0000"/>
<path d="M461.00 447.00 L461.00 458.00" stroke="#5c0000" stroke-width="2.20" fill="none"/>
<circle cx="479.91" cy="449.78" r="2.20" fill="#5c0000"/>
<circle cx="497.13" cy="450.82" r="2.20" fill="#5c0000"/>
<circle cx="514.35" cy="451.86" r="2.20" fill="#5c0000"/>
<circle cx="531.57" cy="452.90" r="2.20" fill="#5c0000"/>
<circle cx="548.79" cy="453.94" r="2.20" fill="#5c0000"/>
<circle cx="566.01" cy="454.99" r="2.20" fill="#5c0000"/>
<circle cx="583.23" cy="456.03" r="2.20" fill="#5c0000"/>
<circle cx="600.45" cy="457.07" r="2.20" fill="#5c0000"/>
<circle cx="617.67" cy="458.11" r="2.20" fill="#5c0000"/>
<circle cx="440.00" cy="446.50" r="2.30" fill="#5c0000"/>
<path d="M614 485.5 L624.6 480.8 L635 485.5 Z" fill="#b8b8b8" opacity="0.9"/>
<circle cx="431.30" cy="444.30" r="2.40" fill="#0a2278"/>
<circle cx="430.90" cy="464.20" r="2.40" fill="#0a2278"/>
<path d="M636.00 456.50 L652.00 456.50" stroke="#20bcee" stroke-width="1.00" fill="none"/>
<path d="M657.00 456.80 L667.00 456.50" stroke="#20bcee" stroke-width="1.00" fill="none"/>
<path d="M633.00 462.00 L646.00 462.00" stroke="#20bcee" stroke-width="1.00" fill="none"/>
<path d="M636.00 464.10 L655.00 464.10" stroke="#16a8d0" stroke-width="1.00" fill="none"/>
<path d="M628.00 468.60 L654.00 468.60" stroke="#20bcee" stroke-width="1.00" fill="none"/>
<path d="M642.50 457.00 L642.50 462.00" stroke="#20bcee" stroke-width="1.00" fill="none"/>
<path d="M644.00 463.00 L644.00 468.50" stroke="#20bcee" stroke-width="1.00" fill="none"/>
<circle cx="632.80" cy="457.50" r="2.20" fill="#5c0000"/>
<circle cx="632.50" cy="467.00" r="2.20" fill="#5c0000"/>
<circle cx="631.00" cy="471.50" r="2.20" fill="#5c0000"/>
<circle cx="657.50" cy="465.50" r="2.20" fill="#5c0000"/>
<circle cx="662.00" cy="464.00" r="2.20" fill="#5c0000"/>
<circle cx="665.50" cy="463.00" r="2.20" fill="#5c0000"/>
<circle cx="677.00" cy="442.20" r="2.20" fill="#5c0000"/>
<circle cx="677.00" cy="449.00" r="2.20" fill="#5c0000"/>
<circle cx="677.00" cy="453.00" r="2.20" fill="#5c0000"/>
<circle cx="687.30" cy="443.30" r="2.20" fill="#5c0000"/>
<circle cx="687.30" cy="459.70" r="2.20" fill="#5c0000"/>
<path d="M667.00 459.00 L680.00 459.30" stroke="#5c0000" stroke-width="3.40" fill="none"/>
<circle cx="680.00" cy="459.30" r="1.80" fill="#5c0000"/>
<path d="M655.00 467.00 L641.00 484.00" stroke="#a80000" stroke-width="1.00" fill="none"/>
<circle cx="641.00" cy="484.00" r="2.20" fill="#5c0000"/>
<path d="M656.00 467.00 L656.50 484.00" stroke="#a80000" stroke-width="1.00" fill="none"/>
<circle cx="656.50" cy="484.00" r="2.20" fill="#5c0000"/>
<path d="M659.00 467.00 L659.50 484.00" stroke="#a80000" stroke-width="1.00" fill="none"/>
<circle cx="659.50" cy="484.00" r="2.20" fill="#5c0000"/>
<path d="M663.00 467.00 L663.80 484.00" stroke="#a80000" stroke-width="1.00" fill="none"/>
<circle cx="663.80" cy="484.00" r="2.20" fill="#5c0000"/>
<path d="M661.00 467.00 L674.60 484.00" stroke="#a80000" stroke-width="1.00" fill="none"/>
<circle cx="674.60" cy="484.00" r="2.20" fill="#5c0000"/>
<path d="M663.00 466.00 L677.00 459.00" stroke="#a80000" stroke-width="1.00" fill="none"/>
<path d="M677.00 442.00 L677.00 457.00" stroke="#5c0000" stroke-width="1.50" fill="none"/>
<path d="M679.00 443.50 L686.00 443.50" stroke="#a010a0" stroke-width="1.60" fill="none"/>
<path d="M687.30 446.00 L687.30 457.00" stroke="#f030f0" stroke-width="1.10" fill="none"/>
<circle cx="629.50" cy="456.30" r="2.40" fill="#0a2278"/>
<circle cx="625.50" cy="464.60" r="2.40" fill="#0a2278"/>
<circle cx="649.40" cy="462.80" r="2.40" fill="#0a2278"/>
<circle cx="654.00" cy="456.80" r="2.40" fill="#0a2278"/>
<circle cx="661.00" cy="460.30" r="2.40" fill="#0a2278"/>
<circle cx="664.30" cy="456.50" r="2.40" fill="#0a2278"/>
</svg>
<svg id="icons" width="1000" height="80" viewBox="0 0 1000 80" style="position:absolute;left:0;top:0"><defs>
<radialGradient id="gball" cx="45%" cy="25%" r="75%"><stop offset="0" stop-color="#a8f0a0"/><stop offset="0.3" stop-color="#28c030"/><stop offset="1" stop-color="#0a7a14"/></radialGradient>
<radialGradient id="rball" cx="40%" cy="30%" r="70%"><stop offset="0" stop-color="#ffd0d0"/><stop offset="0.3" stop-color="#f02020"/><stop offset="1" stop-color="#8a0000"/></radialGradient>
<radialGradient id="dred" cx="40%" cy="30%" r="70%"><stop offset="0" stop-color="#ff9090"/><stop offset="0.35" stop-color="#b80c0c"/><stop offset="1" stop-color="#700000"/></radialGradient>
<radialGradient id="lgreen" cx="40%" cy="30%" r="70%"><stop offset="0" stop-color="#e0ffc0"/><stop offset="0.4" stop-color="#80c830"/><stop offset="1" stop-color="#4a8a10"/></radialGradient>
<linearGradient id="folder" x1="0" y1="0" x2="0" y2="1"><stop offset="0" stop-color="#c8e0fa"/><stop offset="1" stop-color="#6aa0e0"/></linearGradient>
<linearGradient id="page" x1="0" y1="0" x2="0" y2="1"><stop offset="0" stop-color="#f4f4f4"/><stop offset="1" stop-color="#ffffff"/></linearGradient>
<linearGradient id="drive" x1="0" y1="0" x2="0" y2="1"><stop offset="0" stop-color="#ececf0"/><stop offset="0.6" stop-color="#dcdce0"/><stop offset="0.8" stop-color="#a8a8a8"/><stop offset="1" stop-color="#5a5a5a"/></linearGradient>
</defs>
<rect x="453.5" y="28.5" width="8" height="9.5" fill="#fafafa" stroke="#d8d8d8" stroke-width="0.5"/>
<path d="M455 37.5 L457 30 L458.5 30 L460.5 37.5 M455.8 34 H460 M456.5 32 H459" stroke="#2a3ad0" stroke-width="0.9" fill="none"/>
<path d="M50 51 H57.8 L60.6 53.8 V65 H50 Z" fill="url(#page)" stroke="#c8c8c8" stroke-width="0.5"/>
<path d="M57.8 51 V53.8 H60.6" fill="#dcdcdc" stroke="#bcbcbc" stroke-width="0.5"/>
<rect x="50" y="64.6" width="10.6" height="1" fill="#7a7a7a" opacity="0.6"/>
<path d="M56 64 Q55.8 61.8 57 61.2 L59.8 61.2 Q60.5 62 60.4 64 Z" fill="#f2f2f2"/><circle cx="58.2" cy="62.2" r="1.1" fill="#e89838"/><path d="M55.6 61.8 Q57 59.4 60.4 60.2 L60.4 61.2 Q58.5 60.6 56.6 62.4 Z" fill="#1e2c90"/><circle cx="56.2" cy="63.5" r="0.7" fill="#e89838"/>
<path d="M71.8 52.6 L76 52 L80 52.6 L85.8 52 L85.8 63.6 L72.3 65.6 Z" fill="url(#folder)" stroke="#8ab0d8" stroke-width="0.5"/>
<path d="M71.8 52.6 L76 52 L80 52.6 L85.8 52 L85.8 53 L72 54.2 Z" fill="#f4f8fc" opacity="0.9"/>
<path d="M74.5 59.2 Q76 55.6 80.5 56 L83 56.6 Q80.5 56.8 79.6 58.2 Q77.5 57.8 75.6 60 Z" fill="#1c2a8c"/>
<path d="M75.8 61.8 Q78 59.2 82.6 59.6 Q83.6 61.6 79.2 63.2 Z" fill="#f4f4f4"/><circle cx="79.6" cy="59" r="1.4" fill="#f0a030"/><circle cx="76.2" cy="62" r="1.1" fill="#f0a030"/><circle cx="83" cy="59.6" r="0.9" fill="#f0a030"/>
<rect x="94.3" y="51.2" width="13.4" height="14" rx="1.2" fill="url(#drive)"/>
<rect x="97" y="52" width="7.5" height="1" rx="0.5" fill="#505050"/>
<rect x="105.5" y="52" width="1" height="9" fill="#c8c8c8"/>
<path d="M97.6 57.8 Q99 54.8 102.8 55.6 L103.6 56.2 Q101.4 56 100.8 57.2 Q99.2 57 98.4 58.6 Z" fill="#1e2c90"/><circle cx="101.2" cy="57.6" r="1.3" fill="#f0a030"/><path d="M98 60.4 Q100.5 58.4 104 59 Q103.8 61.4 100.4 61.8 Z" fill="#f4f4f4"/><circle cx="98.4" cy="60.2" r="0.9" fill="#e89a30"/><circle cx="103.8" cy="59.4" r="0.9" fill="#e89a30"/>
<path d="M120.2 51 V59 M116.5 55 H124" stroke="#9a9a9a" stroke-width="1.1"/>
<path d="M122 56.3 L123.2 61.5 L124.6 60.2 L130 65.2 L131 64.2 L125.8 59 L127.3 57.8 Z" fill="#f8f8f8" stroke="#8a8a8a" stroke-width="0.6"/>
<path d="M144.5 50 L141.8 66.5 M148.8 50 L151.5 66.5 M146.6 50 L146.2 66.5 M144.34 51.00 H148.96 M143.96 53.30 H149.34 M143.58 55.60 H149.72 M143.21 57.90 H150.09 M142.83 60.20 H150.47 M142.45 62.50 H150.85 M142.08 64.80 H151.22" stroke="#2434c8" stroke-width="0.95" fill="none"/>
<circle cx="151.2" cy="62.2" r="3.7" fill="url(#gball)" stroke="#168a20" stroke-width="0.4"/>
<path d="M149.9 62.4 h2.6 M151.2 61.1 v2.6" stroke="#c8f0c0" stroke-width="0.9"/>
<path d="M164.2 64.6 L169.7 52.1 H176.8 M172.8 52.2 V59" stroke="#303030" stroke-width="1.4" fill="none"/>
<circle cx="173.9" cy="62.2" r="3.7" fill="url(#gball)" stroke="#168a20" stroke-width="0.4"/>
<path d="M172.6 62.4 h2.6 M173.9 61.1 v2.6" stroke="#c8f0c0" stroke-width="0.9"/>
<path d="M189.6 59 L188.3 66 H195 Z" fill="#18a818"/><rect x="189.5" y="59" width="1" height="4" fill="#8a4a10"/>
<circle cx="190.6" cy="55.4" r="4.6" fill="url(#gball)"/>
<circle cx="197.2" cy="62.0" r="3.7" fill="url(#gball)" stroke="#168a20" stroke-width="0.4"/>
<path d="M195.9 62.2 h2.6 M197.2 60.9 v2.6" stroke="#c8f0c0" stroke-width="0.9"/>
<ellipse cx="212.1" cy="57.8" rx="4" ry="4.9" fill="#161616"/>
<ellipse cx="212.1" cy="57.8" rx="3.1" ry="3.9" fill="#5a90d8"/>
<ellipse cx="211.1" cy="57.8" rx="1.6" ry="3.2" fill="#ffffff" opacity="0.45"/>
<ellipse cx="220.3" cy="57.8" rx="4" ry="4.9" fill="#161616"/>
<ellipse cx="220.3" cy="57.8" rx="3.1" ry="3.9" fill="#5a90d8"/>
<ellipse cx="219.3" cy="57.8" rx="1.6" ry="3.2" fill="#ffffff" opacity="0.45"/>
<text x="216.2" y="61.1" font-family="Liberation Sans" font-weight="bold" font-size="9" fill="#ffffff" text-anchor="middle" textLength="14.5" lengthAdjust="spacingAndGlyphs" stroke="#ffffff" stroke-width="0.25">TOP</text>
<ellipse cx="235.2" cy="57.8" rx="4" ry="4.9" fill="#161616"/>
<ellipse cx="235.2" cy="57.8" rx="3.1" ry="3.9" fill="#b89a40"/>
<ellipse cx="234.2" cy="57.8" rx="1.6" ry="3.2" fill="#ffffff" opacity="0.45"/>
<ellipse cx="243.2" cy="57.8" rx="4" ry="4.9" fill="#161616"/>
<ellipse cx="243.2" cy="57.8" rx="3.1" ry="3.9" fill="#b89a40"/>
<ellipse cx="242.2" cy="57.8" rx="1.6" ry="3.2" fill="#ffffff" opacity="0.45"/>
<text x="239.2" y="61.1" font-family="Liberation Sans" font-weight="bold" font-size="9" fill="#ffffff" text-anchor="middle" textLength="14.5" lengthAdjust="spacingAndGlyphs" stroke="#ffffff" stroke-width="0.25">FRONT</text>
<ellipse cx="258.1" cy="57.8" rx="4" ry="4.9" fill="#161616"/>
<ellipse cx="258.1" cy="57.8" rx="3.1" ry="3.9" fill="#b040b8"/>
<ellipse cx="257.1" cy="57.8" rx="1.6" ry="3.2" fill="#ffffff" opacity="0.45"/>
<ellipse cx="266.1" cy="57.8" rx="4" ry="4.9" fill="#161616"/>
<ellipse cx="266.1" cy="57.8" rx="3.1" ry="3.9" fill="#b040b8"/>
<ellipse cx="265.1" cy="57.8" rx="1.6" ry="3.2" fill="#ffffff" opacity="0.45"/>
<text x="262.1" y="61.1" font-family="Liberation Sans" font-weight="bold" font-size="9" fill="#ffffff" text-anchor="middle" textLength="14.5" lengthAdjust="spacingAndGlyphs" stroke="#ffffff" stroke-width="0.25">RIGHT</text>
<ellipse cx="281.2" cy="57.8" rx="4" ry="4.9" fill="#161616"/>
<ellipse cx="281.2" cy="57.8" rx="3.1" ry="3.9" fill="#18a830"/>
<ellipse cx="280.2" cy="57.8" rx="1.6" ry="3.2" fill="#ffffff" opacity="0.45"/>
<ellipse cx="289.2" cy="57.8" rx="4" ry="4.9" fill="#161616"/>
<ellipse cx="289.2" cy="57.8" rx="3.1" ry="3.9" fill="#18a830"/>
<ellipse cx="288.2" cy="57.8" rx="1.6" ry="3.2" fill="#ffffff" opacity="0.45"/>
<text x="285.2" y="61.1" font-family="Liberation Sans" font-weight="bold" font-size="9" fill="#ffffff" text-anchor="middle" textLength="14.5" lengthAdjust="spacingAndGlyphs" stroke="#ffffff" stroke-width="0.25">LEFT</text>
<text x="300.3" y="64.3" font-family="Liberation Sans" font-weight="bold" font-size="12.5" fill="#f4f4f4" textLength="15" lengthAdjust="spacingAndGlyphs">3D</text>
<text x="300.9" y="64.6" font-family="Liberation Sans" font-weight="bold" font-size="12.5" fill="#505050" opacity="0.8" textLength="15" lengthAdjust="spacingAndGlyphs">3D</text>
<path d="M331.6 58.6 L337.2 64.8" stroke="#2a2a2a" stroke-width="1.6" stroke-linecap="round"/>
<circle cx="328.2" cy="55.1" r="4.4" fill="url(#gball)" stroke="#3a3a3a" stroke-width="1"/>
<path d="M354.2 58.6 L360.2 65" stroke="#2a2a2a" stroke-width="1.6" stroke-linecap="round"/>
<circle cx="350.8" cy="55.2" r="4.4" fill="url(#dred)" stroke="#3a3a3a" stroke-width="1"/>
<rect x="349.2" y="54.5" width="3.2" height="1.3" fill="#f0d0d0"/>
<rect x="368.2" y="61" width="17" height="4.4" fill="#5a86dc"/><rect x="368.2" y="61" width="17" height="1.2" fill="#9ab8ee"/><path d="M369 63.4 H384.5" stroke="#3a60b8" stroke-width="0.5" stroke-dasharray="1 1"/>
<path d="M376 54 L382.8 59.4" stroke="#c8a070" stroke-width="1.8" stroke-linecap="round"/>
<path d="M373.6 55.2 L376.6 52.3 L377.8 53.6 L374.8 56.4 Z" fill="#9a9a9a"/>
<path d="M374.6 56.5 L373.2 62" stroke="#f0f0f0" stroke-width="1.2"/>
<path d="M395 49.8 H404.6 L407.6 66.7 H392 Z" fill="#c89ad8" opacity="0.55"/>
<path d="M394.93 50.20 H404.67 M394.62 51.95 H404.98 M394.31 53.70 H405.29 M394.00 55.45 H405.60 M393.69 57.20 H405.91 M393.38 58.95 H406.22 M393.07 60.70 H406.53 M392.75 62.45 H406.85 M392.44 64.20 H407.16 M392.13 65.95 H407.47" stroke="#d070d0" stroke-width="0.7"/>
<path d="M395.00 49.8 L392.00 66.7 M396.92 49.8 L395.12 66.7 M398.84 49.8 L398.24 66.7 M400.76 49.8 L401.36 66.7 M402.68 49.8 L404.48 66.7 M404.60 49.8 L407.60 66.7" stroke="#7a8ae0" stroke-width="0.7"/>
<rect x="414.9" y="53" width="15" height="6.2" fill="#f8f8f8"/><rect x="415.5" y="54" width="1" height="2" fill="#a0b8e0"/><rect x="421" y="54" width="2" height="1" fill="#c0c0c0"/><rect x="426" y="54" width="2" height="1" fill="#c0c0c0"/>
<path d="M414 59 L431 63.5" stroke="#b8a070" stroke-width="1.2"/>
<circle cx="426.4" cy="61.3" r="4.6" fill="url(#gball)"/>
<rect x="424.3" y="61" width="4.2" height="1.3" fill="#d8f0d0" opacity="0.8"/>
<rect x="441.8" y="50.5" width="7.7" height="15.7" rx="1.5" fill="#3a3a3a"/><rect x="442.5" y="51.2" width="6.3" height="14.3" rx="1.2" fill="#6a6a6a"/>
<circle cx="445.7" cy="54.8" r="2.9" fill="url(#lgreen)"/><circle cx="445.7" cy="61.3" r="2.9" fill="url(#rball)"/>
<path d="M475.05 60.56 L471.16 64.45 L465.64 64.45 L461.75 60.56 L461.75 55.04 L465.64 51.15 L471.16 51.15 L475.05 55.04 Z" fill="#d88080" stroke="#e8b0b0" stroke-width="0.6"/>
<text x="468.4" y="60.6" font-family="Liberation Sans" font-weight="bold" font-size="7" fill="#f6e0e0" text-anchor="middle" textLength="12" lengthAdjust="spacingAndGlyphs">STOP</text>
<path d="M483.8 56.8 L491.5 54.3 L499 56.8 L491.5 61.8 Z" fill="#1a8a2a"/><path d="M487.6 56.6 L491.5 55.3 L495.3 56.6 L491.5 58.6 Z" fill="#8a8a8a"/>
<path d="M513.6 66.6 V59.6 H516.2 V60.4 Q517.2 59.3 519 59.3 Q522 59.4 522 62 V66.6 H519.3 V62.4 Q519.3 61.6 518.2 61.6 Q516.2 61.6 516.2 63 V66.6 Z" fill="#f4f4f4" stroke="#a8a8a8" stroke-width="0.5"/>
<path d="M506.2 59 Q510 57.6 513 55.2 Q517 52.3 518.8 49.8" stroke="#3040b0" stroke-width="1.9" fill="none" stroke-linecap="round"/>
<circle cx="514.6" cy="56.2" r="2.1" fill="url(#rball)"/>
<path d="M529 55 L537 57.5 M545.4 50.9 L537.3 57.5 M545.4 66.3 L537.3 57.5" stroke="#7a7a7a" stroke-width="3.4"/>
<path d="M529 54.4 L537 56.9 M544.8 50.4 L537 57 M546 65.8 L537.8 57" stroke="#f0f0f0" stroke-width="1"/>
<circle cx="537.3" cy="57.5" r="4.6" fill="url(#rball)"/>
<rect x="612.2" y="51.9" width="14.8" height="12.4" fill="#e6e6e6" stroke="#d4d4d4" stroke-width="0.5"/><rect x="613" y="53" width="13" height="1" fill="#d0d0d0"/><rect x="623" y="53" width="2.5" height="1" fill="#a8c0e0"/>
<circle cx="623.5" cy="62" r="4.6" fill="#86c886"/><rect x="621.4" y="61.2" width="4.2" height="1.6" fill="#cce8cc"/>
<g font-family="Liberation Sans" font-size="8.6" fill="#141414" stroke="#141414" stroke-width="0.15"><text x="553" y="51">X:</text><text x="553" y="60.7">Y:</text><text x="553" y="70.2">Z:</text><text x="604" y="51" text-anchor="end">-2.60m</text><text x="604" y="60.7" text-anchor="end">37.80m</text><text x="604" y="70.2" text-anchor="end">-22.90m</text></g></svg>
</body></html>
